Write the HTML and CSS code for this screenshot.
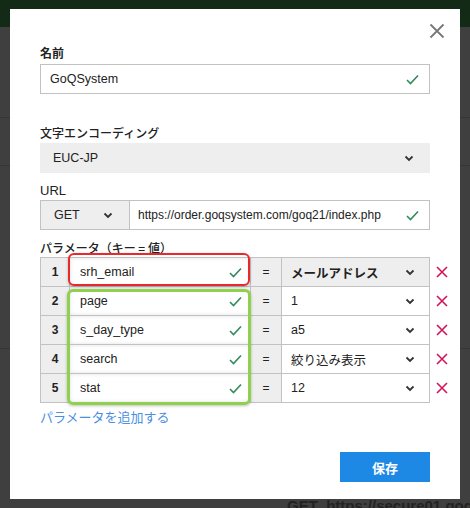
FILE: index.html
```html
<!DOCTYPE html>
<html lang="ja">
<head>
<meta charset="utf-8">
<link rel="stylesheet" href="styles.css">
</head>
<body>
<div class="page">
  <div class="topbar"></div>
  <div class="backdrop">
    <div class="bg-line l1"></div>
    <div class="bg-line l2"></div>
    <div class="bg-line l3"></div>
    <div class="bg-text">GET&nbsp; https://secure01.goqs</div>
  </div>
</div>

<div class="modal">
  <button class="close" aria-label="close">
    <svg width="16" height="16" viewBox="0 0 16 16"><path d="M1.5 1.5L14.5 14.5M14.5 1.5L1.5 14.5" stroke="#777" stroke-width="1.8" fill="none"/></svg>
  </button>

  <div class="label bold">名前</div>
  <div class="input name-input">
    <span class="val">GoQSystem</span>
    <svg class="check" width="13" height="11" viewBox="0 0 13 11"><path d="M1 6L4.5 9.5L12 1.5" stroke="#338a5a" stroke-width="1.6" fill="none"/></svg>
  </div>

  <div class="label">文字エンコーディング</div>
  <div class="select enc">
    <span class="val">EUC-JP</span>
    <svg class="chev" width="10" height="7" viewBox="0 0 10 7"><path d="M1.5 1.5L5 5L8.5 1.5" stroke="#333" stroke-width="1.8" fill="none"/></svg>
  </div>

  <div class="label url-label">URL</div>
  <div class="url-row">
    <div class="method">
      <span class="val">GET</span>
      <svg class="chev" width="10" height="7" viewBox="0 0 10 7"><path d="M1.5 1.5L5 5L8.5 1.5" stroke="#333" stroke-width="1.8" fill="none"/></svg>
    </div>
    <div class="url-input">
      <span class="val">https://order.goqsystem.com/goq21/index.php</span>
      <svg class="check" width="13" height="11" viewBox="0 0 13 11"><path d="M1 6L4.5 9.5L12 1.5" stroke="#338a5a" stroke-width="1.6" fill="none"/></svg>
    </div>
  </div>

  <div class="label param-label">パラメータ（キー = 値）</div>
  <div class="params">
    <div class="ptable">
      <div class="row">
        <div class="c num">1</div>
        <div class="c key"><span>srh_email</span><svg class="check" width="13" height="11" viewBox="0 0 13 11"><path d="M1 6L4.5 9.5L12 1.5" stroke="#338a5a" stroke-width="1.6" fill="none"/></svg></div>
        <div class="c eq">=</div>
        <div class="c v gray"><span>メールアドレス</span><svg class="chev" width="10" height="7" viewBox="0 0 10 7"><path d="M1.5 1.5L5 5L8.5 1.5" stroke="#333" stroke-width="1.8" fill="none"/></svg></div>
        <div class="del"><svg width="12" height="12" viewBox="0 0 12 12"><path d="M1 1L11 11M11 1L1 11" stroke="#d4145a" stroke-width="1.6" fill="none"/></svg></div>
      </div>
      <div class="row">
        <div class="c num">2</div>
        <div class="c key"><span>page</span><svg class="check" width="13" height="11" viewBox="0 0 13 11"><path d="M1 6L4.5 9.5L12 1.5" stroke="#338a5a" stroke-width="1.6" fill="none"/></svg></div>
        <div class="c eq">=</div>
        <div class="c v"><span>1</span><svg class="chev" width="10" height="7" viewBox="0 0 10 7"><path d="M1.5 1.5L5 5L8.5 1.5" stroke="#333" stroke-width="1.8" fill="none"/></svg></div>
        <div class="del"><svg width="12" height="12" viewBox="0 0 12 12"><path d="M1 1L11 11M11 1L1 11" stroke="#d4145a" stroke-width="1.6" fill="none"/></svg></div>
      </div>
      <div class="row">
        <div class="c num">3</div>
        <div class="c key"><span>s_day_type</span><svg class="check" width="13" height="11" viewBox="0 0 13 11"><path d="M1 6L4.5 9.5L12 1.5" stroke="#338a5a" stroke-width="1.6" fill="none"/></svg></div>
        <div class="c eq">=</div>
        <div class="c v"><span>a5</span><svg class="chev" width="10" height="7" viewBox="0 0 10 7"><path d="M1.5 1.5L5 5L8.5 1.5" stroke="#333" stroke-width="1.8" fill="none"/></svg></div>
        <div class="del"><svg width="12" height="12" viewBox="0 0 12 12"><path d="M1 1L11 11M11 1L1 11" stroke="#d4145a" stroke-width="1.6" fill="none"/></svg></div>
      </div>
      <div class="row">
        <div class="c num">4</div>
        <div class="c key"><span>search</span><svg class="check" width="13" height="11" viewBox="0 0 13 11"><path d="M1 6L4.5 9.5L12 1.5" stroke="#338a5a" stroke-width="1.6" fill="none"/></svg></div>
        <div class="c eq">=</div>
        <div class="c v"><span>絞り込み表示</span><svg class="chev" width="10" height="7" viewBox="0 0 10 7"><path d="M1.5 1.5L5 5L8.5 1.5" stroke="#333" stroke-width="1.8" fill="none"/></svg></div>
        <div class="del"><svg width="12" height="12" viewBox="0 0 12 12"><path d="M1 1L11 11M11 1L1 11" stroke="#d4145a" stroke-width="1.6" fill="none"/></svg></div>
      </div>
      <div class="row last">
        <div class="c num">5</div>
        <div class="c key"><span>stat</span><svg class="check" width="13" height="11" viewBox="0 0 13 11"><path d="M1 6L4.5 9.5L12 1.5" stroke="#338a5a" stroke-width="1.6" fill="none"/></svg></div>
        <div class="c eq">=</div>
        <div class="c v"><span>12</span><svg class="chev" width="10" height="7" viewBox="0 0 10 7"><path d="M1.5 1.5L5 5L8.5 1.5" stroke="#333" stroke-width="1.8" fill="none"/></svg></div>
        <div class="del"><svg width="12" height="12" viewBox="0 0 12 12"><path d="M1 1L11 11M11 1L1 11" stroke="#d4145a" stroke-width="1.6" fill="none"/></svg></div>
      </div>
    </div>
    <div class="mark red"></div>
    <div class="mark green"></div>
  </div>

  <div class="add-link">パラメータを追加する</div>

  <div class="footer">
    <button class="save">保存</button>
  </div>
</div>
</body>
</html>
```

FILE: styles.css
```css
* { box-sizing: border-box; }
html, body { margin: 0; padding: 0; }
body {
  width: 470px;
  height: 508px;
  overflow: hidden;
  font-family: "Liberation Sans", Arial, "Noto Sans CJK JP", sans-serif;
  font-size: 12px;
  color: #222;
  background: #3f3f3f;
  position: relative;
}
.page { width: 470px; height: 508px; }
.topbar { height: 27px; background: #122a16; }
.backdrop { position: relative; height: 481px; background: #3f3f3f; overflow: hidden; }
.bg-line { position: absolute; left: 0; right: 0; height: 1px; background: #353535; }
.bg-line.l1 { top: 90px; }
.bg-line.l2 { top: 138px; }
.bg-line.l3 { top: 321px; }
.bg-text {
  position: absolute;
  left: 287px;
  top: 472px;
  line-height: 14px;
  color: #222;
  font-size: 15px;
  font-weight: bold;
  white-space: nowrap;
}

.modal {
  position: absolute;
  left: 10px;
  top: 9px;
  width: 450px;
  height: 490px;
  background: #fff;
  padding: 36px 30px 0 30px;
}
.close {
  position: absolute;
  right: 14px;
  top: 13px;
  width: 18px;
  height: 18px;
  padding: 0;
  border: 0;
  background: none;
  display: flex;
  align-items: center;
  justify-content: center;
}

.label {
  height: 16px;
  line-height: 16px;
  font-family: "Noto Sans CJK JP", "Liberation Sans", sans-serif;
  font-size: 12px;
  font-weight: 500;
  color: #222;
  margin-bottom: 3px;
}
.label.bold { font-weight: 700; }

.input {
  height: 30px;
  border: 1px solid #c2c2c2;
  display: flex;
  align-items: center;
  justify-content: space-between;
  padding: 0 10px 0 9px;
  font-size: 12.5px;
  color: #222;
}
.name-input { margin-bottom: 31px; }
.name-input + .label { margin-bottom: 2px; }

.select {
  height: 30px;
  background: #eeeeee;
  display: flex;
  align-items: center;
  justify-content: space-between;
  padding: 0 16px 0 13px;
  font-size: 12.5px;
  color: #222;
}
.url-label { margin-top: 10px; margin-bottom: 1px; font-family: "Liberation Sans", Arial, sans-serif; font-size: 13px; }

.url-row {
  height: 30px;
  display: flex;
  border: 1px solid #c2c2c2;
}
.method {
  width: 89px;
  background: #eeeeee;
  border-right: 1px solid #c2c2c2;
  display: flex;
  align-items: center;
  justify-content: space-between;
  padding: 0 16px 0 13px;
  font-size: 12.5px;
}
.url-input {
  flex: 1;
  display: flex;
  align-items: center;
  justify-content: space-between;
  padding: 0 10px 0 8px;
  font-size: 12px;
  color: #222;
}

.param-label { margin-top: 10px; margin-bottom: 1px; }

.params { position: relative; }
.ptable {
  width: 390px;
  border-top: 1px solid #c2c2c2;
  border-left: 1px solid #c2c2c2;
}
.row {
  display: grid;
  grid-template-columns: 29px 181px 31px 148px;
  height: 29px;
  position: relative;
}
.c {
  border-right: 1px solid #c2c2c2;
  border-bottom: 1px solid #c2c2c2;
  display: flex;
  align-items: center;
  font-size: 12.5px;
  color: #222;
}
.num {
  background: #eeeeee;
  justify-content: center;
  font-weight: bold;
  font-size: 12px;
}
.key {
  justify-content: space-between;
  padding: 0 8px 0 10px;
  background: #fff;
  box-shadow: inset 0 0 4px rgba(0,0,0,0.12);
}
.eq {
  background: #eeeeee;
  justify-content: center;
  font-size: 12px;
}
.v {
  justify-content: space-between;
  padding: 0 14px 0 9px;
  font-family: "Liberation Sans", Arial, "Noto Sans CJK JP", sans-serif;
}
.v.gray { background: #eeeeee; font-weight: bold; }
.del {
  position: absolute;
  left: 394px;
  top: 0;
  height: 28px;
  width: 14px;
  display: flex;
  align-items: center;
  justify-content: center;
}

.mark {
  position: absolute;
  pointer-events: none;
  border-radius: 6px;
}
.mark.red {
  left: 28px;
  top: -4px;
  width: 182px;
  height: 33px;
  border: 2px solid #e8282b;
  box-shadow: 0 1px 3px rgba(0,0,0,0.25);
}
.mark.green {
  left: 27px;
  top: 32px;
  width: 184px;
  height: 116px;
  border: 3px solid #8fd14f;
  box-shadow: 0 1px 3px rgba(0,0,0,0.25);
}

.add-link {
  margin-top: 6px;
  height: 16px;
  line-height: 16px;
  font-family: "Noto Sans CJK JP", sans-serif;
  font-size: 13px;
  color: #4a90e2;
}

.footer {
  display: flex;
  justify-content: flex-end;
  margin-top: 27px;
}
.save {
  width: 90px;
  height: 30px;
  border: 0;
  background: #1e88e5;
  color: #fff;
  font-family: "Noto Sans CJK JP", sans-serif;
  font-size: 13px;
  font-weight: bold;
  padding: 0;
}
```
